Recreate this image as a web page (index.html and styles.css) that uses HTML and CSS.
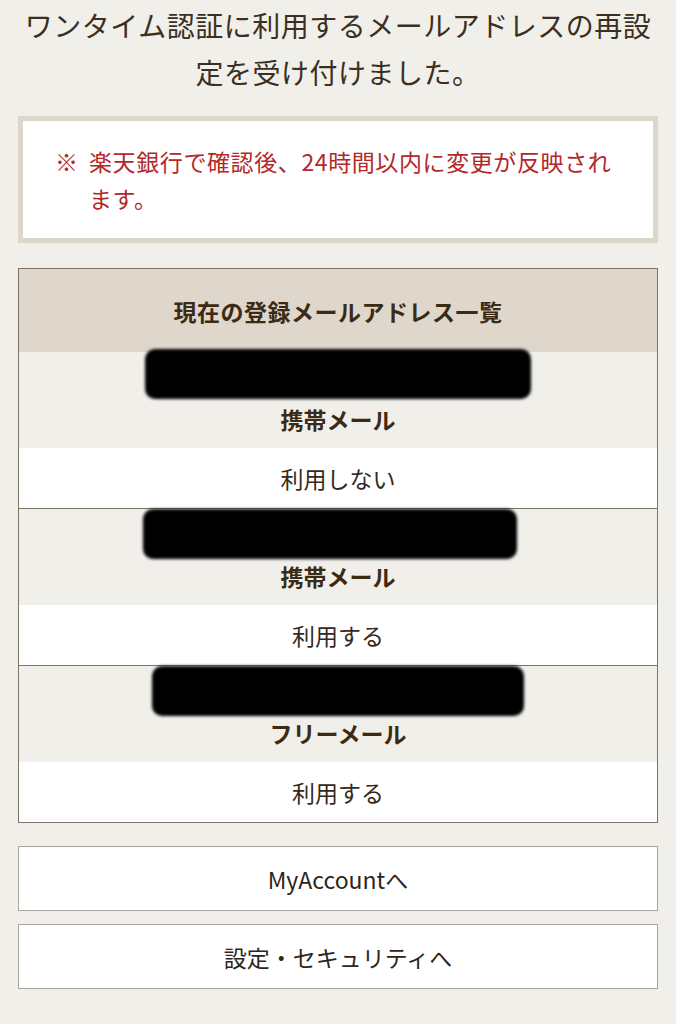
FILE: index.html
```html
<!DOCTYPE html>
<html lang="ja">
<head>
<meta charset="utf-8">
<title>メールアドレス再設定</title>
<link rel="stylesheet" href="styles.css">
</head>
<body>
<main class="page">
  <h1 class="title">ワンタイム認証に利用するメールアドレスの再設定を受け付けました。</h1>

  <div class="notice">
    <span class="notice-mark">※</span>
    <p class="notice-text">楽天銀行で確認後、24時間以内に変更が反映されます。</p>
  </div>

  <section class="list">
    <div class="list-head">現在の登録メールアドレス一覧</div>

    <div class="entry">
      <div class="entry-info">
        <div class="redact redact-a"></div>
        <div class="entry-type">携帯メール</div>
      </div>
      <div class="entry-use">利用しない</div>
    </div>

    <div class="entry">
      <div class="entry-info">
        <div class="redact redact-b"></div>
        <div class="entry-type">携帯メール</div>
      </div>
      <div class="entry-use">利用する</div>
    </div>

    <div class="entry">
      <div class="entry-info">
        <div class="redact redact-c"></div>
        <div class="entry-type">フリーメール</div>
      </div>
      <div class="entry-use">利用する</div>
    </div>
  </section>

  <nav class="actions">
    <a class="btn" href="#">MyAccountへ</a>
    <a class="btn" href="#">設定・セキュリティへ</a>
  </nav>
</main>
</body>
</html>
```

FILE: styles.css
```css
html, body {
  margin: 0;
  padding: 0;
  background: #f1efea;
}

body {
  font-family: "Noto Sans CJK JP", "Noto Sans", sans-serif;
  color: #34291c;
}

.page {
  padding: 2px 18px 30px;
  display: flex;
  flex-direction: column;
}

.title {
  margin: 0;
  font-size: 28px;
  font-weight: 400;
  line-height: 47px;
  letter-spacing: 0.5px;
  text-align: center;
  color: #3a2f22;
}

.notice {
  margin-top: 20px;
  border: 5px solid #ddd6ca;
  background: #ffffff;
  padding: 22px 32px 21px 32px;
  display: flex;
  color: #b3282a;
  font-size: 23px;
  line-height: 37px;
}

.notice-mark {
  flex: 0 0 34px;
}

.notice-text {
  margin: 0;
  flex: 1;
  letter-spacing: 0.6px;
}

.list {
  margin-top: 25px;
  border: 1px solid #7d7468;
  display: flex;
  flex-direction: column;
}

.list-head {
  background: #dfd7cb;
  height: 83px;
  display: flex;
  align-items: center;
  justify-content: center;
  font-size: 23px;
  font-weight: 700;
  letter-spacing: 0.5px;
  color: #3b2a14;
}

.entry + .entry {
  border-top: 1px solid #7d7468;
}

.entry-info {
  background: #f1efea;
  display: flex;
  flex-direction: column;
  align-items: center;
  padding-bottom: 11px;
}

.redact {
  height: 50px;
  background: #000;
  border-radius: 10px;
  filter: blur(1.5px);
}

.redact-a { width: 386px; margin-top: -3px; margin-bottom: 3px; }
.redact-b { width: 374px; margin-right: 16px; }
.redact-c { width: 372px; }

.entry-type {
  font-size: 23px;
  font-weight: 700;
  line-height: 35px;
  color: #3b2a14;
}

.entry-use {
  background: #fff;
  height: 60px;
  display: flex;
  align-items: center;
  justify-content: center;
  font-size: 23px;
  color: #34291c;
}

.actions {
  margin-top: 23px;
  display: flex;
  flex-direction: column;
  gap: 13px;
}

.btn {
  height: 63px;
  border: 1px solid #a7a39d;
  background: #fff;
  display: flex;
  align-items: center;
  justify-content: center;
  font-size: 23px;
  color: #2e251a;
  text-decoration: none;
}
```
